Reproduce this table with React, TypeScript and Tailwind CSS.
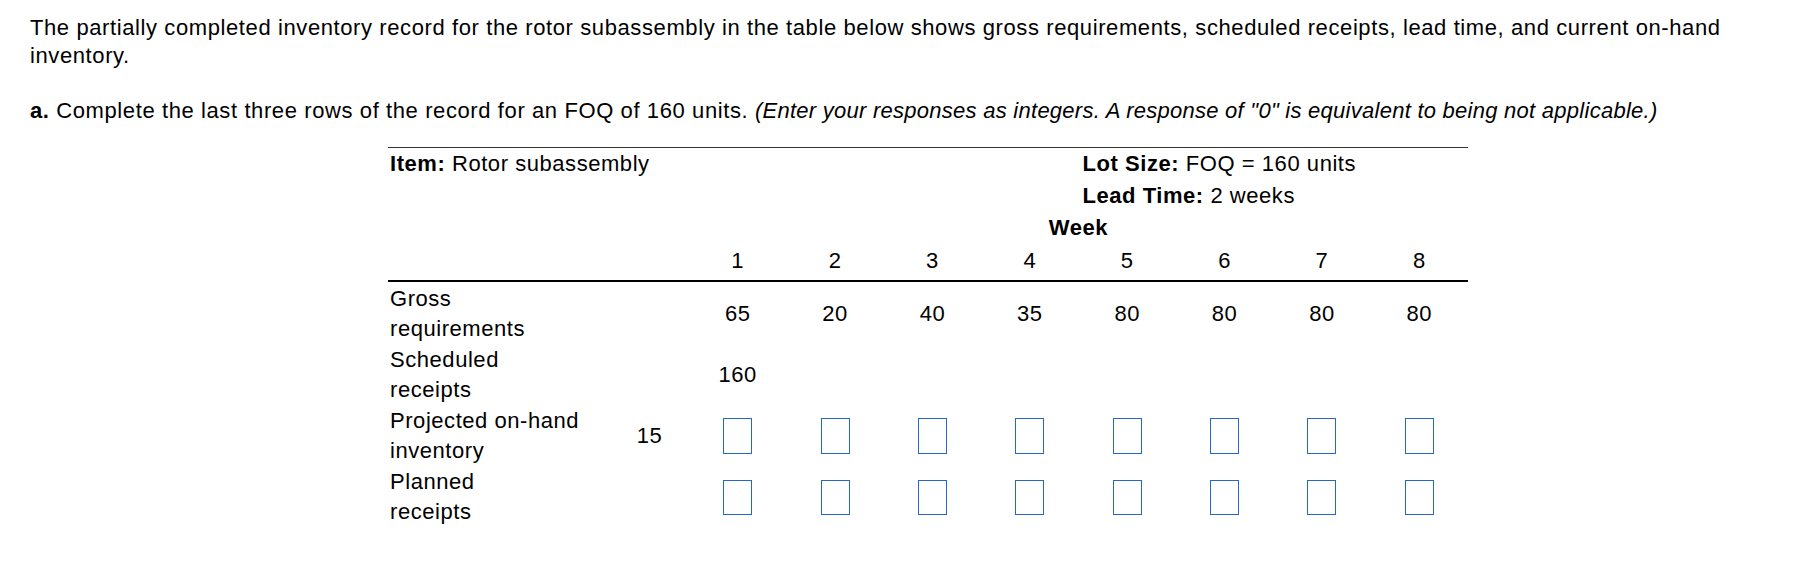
import React from "react";

const weeks = [1, 2, 3, 4, 5, 6, 7, 8];
const gross = [65, 20, 40, 35, 80, 80, 80, 80];

export default function App() {
  return (
    <div
      className="min-h-[562px] bg-white text-black pt-[14px] pl-[30px] pr-[30px] text-[22px] leading-[28px] tracking-[0.6px]"
      style={{ fontFamily: '"Liberation Sans", Arial, sans-serif' }}
    >
      <p>
        The partially completed inventory record for the rotor subassembly in the table below shows gross requirements,
        scheduled receipts, lead time, and current on-hand inventory.
      </p>
      <p className="mt-[27px]">
        <span className="font-bold">a.</span> Complete the last three rows of the record for an FOQ of 160 units.{" "}
        <i className="tracking-[0.26px]">
          (Enter your responses as integers. A response of "0" is equivalent to being not applicable.)
        </i>
      </p>

      <div className="mt-[22px] ml-[358px] w-[1080px] tracking-[0.55px]">
        {/* header */}
        <div className="border-t border-[#333] border-b-2 border-b-black pb-[2px] grid grid-cols-[222px_79px_repeat(8,97.375px)] leading-[32px]">
          <div className="col-span-6 pl-[2px]">
            <span className="font-bold">Item:</span> Rotor subassembly
          </div>
          <div className="col-span-4 pl-[4px]">
            <span className="font-bold">Lot Size:</span> FOQ = 160 units
          </div>
          <div className="col-span-6" />
          <div className="col-span-4 pl-[4px]">
            <span className="font-bold">Lead Time:</span> 2 weeks
          </div>
          <div className="col-span-2" />
          <div className="col-span-8 text-center font-bold">Week</div>
          <div className="col-span-2" />
          {weeks.map((w) => (
            <div key={w} className="text-center leading-[34px]">
              {w}
            </div>
          ))}
        </div>

        {/* body */}
        <div className="pt-[1px] grid grid-cols-[222px_79px_repeat(8,97.375px)] leading-[30px]">
          {/* Gross requirements */}
          <div className="pt-[1px] pl-[2px]">
            Gross
            <br />
            requirements
          </div>
          <div />
          {gross.map((g, i) => (
            <div key={i} className="pt-[1px] flex items-center justify-center">
              {g}
            </div>
          ))}

          {/* Scheduled receipts */}
          <div className="pt-[1px] pl-[2px]">
            Scheduled
            <br />
            receipts
          </div>
          <div />
          <div className="pt-[1px] flex items-center justify-center">160</div>
          {weeks.slice(1).map((w) => (
            <div key={w} />
          ))}

          {/* Projected on-hand inventory */}
          <div className="pt-[1px] pl-[2px]">
            Projected on-hand
            <br />
            inventory
          </div>
          <div className="pt-[1px] flex items-center justify-center">15</div>
          {weeks.map((w) => (
            <div key={w} className="pt-[1px] flex items-center justify-center">
              <div className="w-[29px] h-[36px] border border-[#2566cc] bg-white" />
            </div>
          ))}

          {/* Planned receipts */}
          <div className="pt-[1px] pl-[2px]">
            Planned
            <br />
            receipts
          </div>
          <div />
          {weeks.map((w) => (
            <div key={w} className="pt-[1px] flex items-center justify-center">
              <div className="w-[29px] h-[35px] border border-[#2566cc] bg-white" />
            </div>
          ))}
        </div>
      </div>
    </div>
  );
}
